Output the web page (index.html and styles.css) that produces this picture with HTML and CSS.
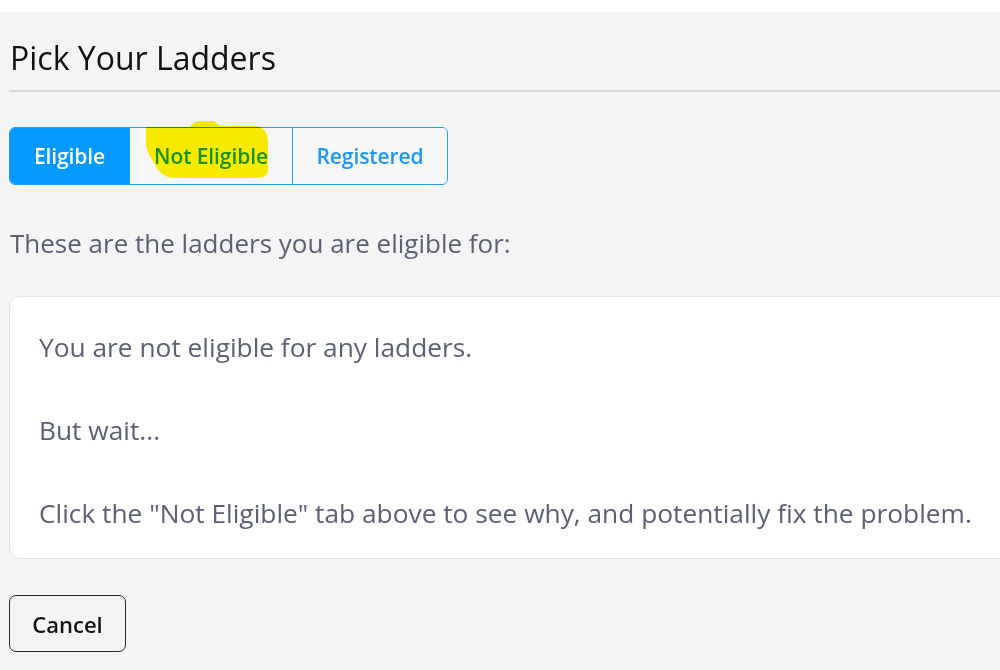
FILE: index.html
```html
<!DOCTYPE html>
<html>
<head>
<meta charset="utf-8">
<link rel="stylesheet" href="styles.css">
</head>
<body>
<div class="modal">
  <h1 class="title">Pick Your Ladders</h1>
  <div class="rule"></div>
  <div class="tabs-wrap">
    <div class="tabs">
      <button class="tab active">Eligible</button>
      <button class="tab tab-mid">Not Eligible</button>
      <button class="tab">Registered</button>
    </div>
    <svg class="highlight" width="124" height="58" viewBox="0 0 124 58">
      <path d="M0 6 L44 6 C46 2 50 0 56 0 L68 0 C70 2 72 4 76 5 L108 5 C118 5 122 12 122 22 L122 48 C122 54 118 57 110 57 L28 57 C18 57 12 50 8 42 C4 36 1 30 0 24 Z" fill="#fff400"/>
    </svg>
  </div>
  <p class="lead">These are the ladders you are eligible for:</p>
  <div class="card">
    <p class="card-line">You are not eligible for any ladders.</p>
    <p class="card-line">But wait...</p>
    <p class="card-line">Click the "Not Eligible" tab above to see why, and potentially fix the problem.</p>
  </div>
  <button class="cancel">Cancel</button>
</div>
</body>
</html>
```

FILE: styles.css
```css
html, body {
  margin: 0;
  padding: 0;
  background: #ffffff;
  overflow: hidden;
  width: 1000px;
  height: 670px;
}

.modal {
  margin-top: 12px;
  background: #f4f4f4;
  height: 658px;
  width: 1040px;
  padding-left: 9px;
  box-sizing: border-box;
  font-family: "Open Sans", "Noto Sans", sans-serif;
}

.title {
  margin: 0;
  padding-top: 26px;
  padding-left: 1px;
  font-size: 32px;
  font-weight: 400;
  line-height: 40px;
  color: #111111;
}

.rule {
  margin-top: 12px;
  height: 2px;
  background: #d8d8d8;
}

.tabs-wrap {
  position: relative;
  margin-top: 35px;
  height: 58px;
}

.tabs {
  display: inline-flex;
  border: 1.5px solid #1e9cff;
  border-radius: 6px;
  overflow: hidden;
  height: 58px;
  box-sizing: border-box;
}

.tab {
  font-family: inherit;
  font-size: 21px;
  font-weight: 600;
  color: #1a98fb;
  background: #f6f6f6;
  border: none;
  padding: 0;
  margin: 0;
  letter-spacing: -0.1px;
}

.tab:nth-child(1) { width: 119px; }
.tab:nth-child(2) { width: 164px; border-left: 1.5px solid #1e9cff; border-right: 1.5px solid #1e9cff; }
.tab:nth-child(3) { width: 154px; }

.tab.active {
  background: #0399ff;
  color: #ffffff;
}

.highlight {
  position: absolute;
  left: 137px;
  top: -6px;
  mix-blend-mode: multiply;
}

.lead {
  margin: 42px 0 0 1px;
  font-size: 26px;
  line-height: 32px;
  color: #5b6074;
}

.card {
  margin-top: 37px;
  background: #ffffff;
  border: 1px solid #e3e3e3;
  border-radius: 11px;
  padding: 33px 0 0 29px;
  height: 263px;
  box-sizing: border-box;
}

.card-line {
  margin: 0 0 49px 0;
  font-size: 26.3px;
  line-height: 34px;
  color: #5b6074;
  white-space: nowrap;
}

.card-line:last-child {
  margin-bottom: 0;
}

.cancel {
  display: block;
  margin-top: 36px;
  width: 117px;
  height: 57px;
  background: transparent;
  border: 1.5px solid #2a2a2a;
  border-radius: 7px;
  font-family: inherit;
  font-size: 22px;
  font-weight: 600;
  color: #111111;
}
```
